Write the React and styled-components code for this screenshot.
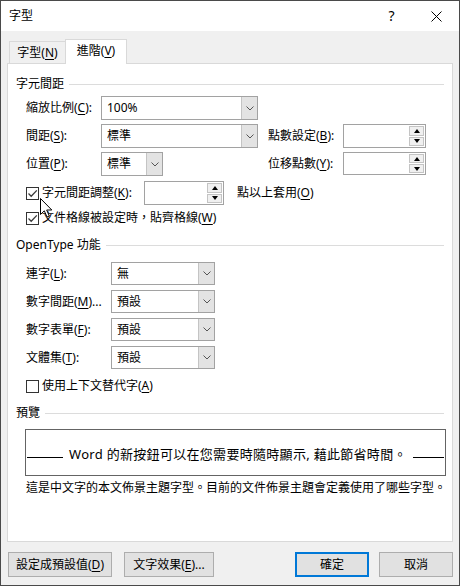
import React from 'react'
import styled, { createGlobalStyle } from 'styled-components'

const GlobalStyle = createGlobalStyle`
  html, body { margin: 0; padding: 0; background: #fff; }
  body {
    font-family: "Noto Sans", "Noto Sans CJK TC", sans-serif;
    font-size: 12px;
    line-height: 16px;
    color: #000;
  }
  * { box-sizing: border-box; }
  u { text-underline-offset: 2px; }
`

const Window = styled.div`
  position: relative;
  width: 460px;
  height: 586px;
  border: 1px solid #4a4a4a;
  display: flex;
  flex-direction: column;
  overflow: hidden;
`

const TitleBar = styled.div`
  height: 30px;
  background: #fff;
  display: flex;
  align-items: center;
  padding-left: 8px;
`

const Title = styled.div`
  flex: 1;
`

const CaptionButton = styled.div`
  width: 45px;
  height: 30px;
  display: flex;
  align-items: center;
  justify-content: center;
  font-size: 14px;
`

const Body = styled.div`
  flex: 1;
  background: #f0f0f0;
  padding: 8px 6px 8px 6px;
  display: flex;
  flex-direction: column;
`

const TabStrip = styled.div`
  display: flex;
  align-items: flex-end;
  height: 25px;
  margin-left: 2px;
  margin-bottom: -1px;
  position: relative;
  z-index: 1;
`

const Tab = styled.div`
  height: ${({ $active }) => ($active ? '25px' : '22px')};
  margin-bottom: ${({ $active }) => ($active ? '0' : '1px')};
  width: ${({ $active }) => ($active ? '62px' : '56px')};
  background: ${({ $active }) => ($active ? '#fff' : '#f0f0f0')};
  border: 1px solid #d9d9d9;
  border-bottom: none;
  border-right: ${({ $active }) => ($active ? '1px solid #d9d9d9' : 'none')};
  display: flex;
  align-items: center;
  justify-content: center;
  padding-bottom: ${({ $active }) => ($active ? '3px' : '0')};
`

const Panel = styled.div`
  height: 479px;
  background: #fff;
  border: 1px solid #d9d9d9;
  padding: 0 8px;
  display: flex;
  flex-direction: column;
`

const SectionHeader = styled.div`
  display: flex;
  align-items: center;
  height: 16px;
  margin-top: ${({ $mt }) => $mt}px;
  &::after {
    content: '';
    flex: 1;
    height: 1px;
    background: #dcdcdc;
    margin-left: 5px;
  }
`

const SpacingGrid = styled.div`
  display: grid;
  grid-template-columns: 75px 157px 10px 75px 83px;
  grid-auto-rows: 24px;
  row-gap: 4px;
  margin: 4px 0 0 10px;
`

const OpenTypeGrid = styled.div`
  display: grid;
  grid-template-columns: 85px 104px;
  grid-auto-rows: 23px;
  row-gap: 5px;
  margin: 9px 0 0 10px;
`

const Label = styled.div`
  grid-column: ${({ $col }) => $col || 1};
  align-self: center;
  white-space: nowrap;
`

const ComboBox = styled.div`
  width: ${({ $w }) => $w}px;
  height: 100%;
  border: 1px solid #a2a2a2;
  background: #fff;
  display: flex;
`

const ComboValue = styled.div`
  flex: 1;
  display: flex;
  align-items: center;
  padding-left: 5px;
`

const ComboArrow = styled.div`
  width: 16px;
  background: #e3e3e3;
  border-left: 1px solid #c4c4c4;
  display: flex;
  align-items: center;
  justify-content: center;
`

const SpinBox = styled.div`
  width: ${({ $w }) => $w}px;
  height: ${({ $h }) => $h || 23}px;
  border: 1px solid #a2a2a2;
  background: #fff;
  display: flex;
  padding: 1px;
`

const SpinField = styled.div`
  flex: 1;
`

const SpinButtons = styled.div`
  width: 15px;
  display: flex;
  flex-direction: column;
  gap: 1px;
`

const SpinButton = styled.div`
  flex: 1;
  background: #f0f0f0;
  border: 1px solid #c4c4c4;
  display: flex;
  align-items: center;
  justify-content: center;
  &::before {
    content: '';
    border-left: 3.5px solid transparent;
    border-right: 3.5px solid transparent;
    ${({ $down }) =>
      $down ? 'border-top: 4px solid #000;' : 'border-bottom: 4px solid #000;'}
  }
`

const CheckRow = styled.div`
  display: flex;
  align-items: center;
  height: ${({ $h }) => $h}px;
  margin-top: ${({ $mt }) => $mt}px;
  margin-left: 10px;
  white-space: nowrap;
`

const CheckLabel = styled.div`
  display: flex;
  align-items: center;
  width: ${({ $w }) => ($w ? `${$w}px` : 'auto')};
  gap: 3px;
`

const CheckBox = styled.div`
  width: 13px;
  height: 13px;
  border: 1px solid #333;
  background: #fff;
  display: flex;
  align-items: center;
  justify-content: center;
  flex-shrink: 0;
`

const TrailText = styled.div`
  margin-left: 13px;
`

const PreviewBox = styled.div`
  margin: 8px 0 0 9px;
  width: 421px;
  height: 47px;
  border: 1px solid #646464;
  display: flex;
  align-items: center;
  padding: 3px 1px 0 1px;
`

const PreviewRule = styled.div`
  width: ${({ $w }) => ($w ? `${$w}px` : 'auto')};
  flex: ${({ $w }) => ($w ? 'none' : '1')};
  height: 1px;
  background: #000;
  margin-top: 6px;
`

const PreviewText = styled.div`
  font-size: 13px;
  letter-spacing: 0.3px;
  margin: 0 6px;
  white-space: nowrap;
`

const Description = styled.div`
  margin: 4px 0 0 10px;
  white-space: nowrap;
`

const Footer = styled.div`
  display: flex;
  margin-top: 10px;
  height: 25px;
  padding-left: 1px;
`

const Button = styled.div`
  width: ${({ $w }) => $w}px;
  margin-left: ${({ $ml }) => ($ml === 'auto' ? 'auto' : `${$ml || 0}px`)};
  background: #e1e1e1;
  border: ${({ $primary }) => ($primary ? '2px solid #0078d7' : '1px solid #adadad')};
  display: flex;
  align-items: center;
  justify-content: center;
  white-space: nowrap;
`

const Cursor = styled.svg`
  position: absolute;
  left: 39px;
  top: 197px;
`

const Chevron = () => (
  <svg width="8" height="5" viewBox="0 0 8 5">
    <polyline points="0.5,0.5 4,4 7.5,0.5" fill="none" stroke="#555" strokeWidth="1" />
  </svg>
)

const Combo = ({ value, width }) => (
  <ComboBox $w={width}>
    <ComboValue>{value}</ComboValue>
    <ComboArrow>
      <Chevron />
    </ComboArrow>
  </ComboBox>
)

const Spin = ({ width, height }) => (
  <SpinBox $w={width} $h={height}>
    <SpinField />
    <SpinButtons>
      <SpinButton />
      <SpinButton $down />
    </SpinButtons>
  </SpinBox>
)

const Check = ({ checked }) => (
  <CheckBox>
    {checked && (
      <svg width="11" height="11" viewBox="0 0 11 11">
        <polyline points="1.5,5.5 4.2,8.2 9.8,2.4" fill="none" stroke="#3a3a3a" strokeWidth="1.3" />
      </svg>
    )}
  </CheckBox>
)

const Key = ({ children }) => <u>{children}</u>

export default function App() {
  return (
    <>
      <GlobalStyle />
      <Window>
        <TitleBar>
          <Title>字型</Title>
          <CaptionButton>?</CaptionButton>
          <CaptionButton>
            <svg width="11" height="11" viewBox="0 0 11 11">
              <path d="M0.5 0.5 L10.5 10.5 M10.5 0.5 L0.5 10.5" stroke="#000" strokeWidth="1" />
            </svg>
          </CaptionButton>
        </TitleBar>

        <Body>
          <TabStrip>
            <Tab><span>字型(<Key>N</Key>)</span></Tab>
            <Tab $active><span>進階(<Key>V</Key>)</span></Tab>
          </TabStrip>

          <Panel>
            <SectionHeader $mt={12}>字元間距</SectionHeader>
            <SpacingGrid>
              <Label>縮放比例(<Key>C</Key>):</Label>
              <Combo value="100%" width={157} />

              <Label>間距(<Key>S</Key>):</Label>
              <Combo value="標準" width={157} />
              <Label $col={4}>點數設定(<Key>B</Key>):</Label>
              <Spin width={83} height={24} />

              <Label>位置(<Key>P</Key>):</Label>
              <Combo value="標準" width={62} />
              <Label $col={4}>位移點數(<Key>Y</Key>):</Label>
              <Spin width={83} height={23} />
            </SpacingGrid>

            <CheckRow $h={24} $mt={5}>
              <CheckLabel $w={118}>
                <Check checked />
                <span>字元間距調整(<Key>K</Key>):</span>
              </CheckLabel>
              <Spin width={80} height={24} />
              <TrailText>點以上套用(<Key>O</Key>)</TrailText>
            </CheckRow>
            <CheckRow $h={18} $mt={4}>
              <CheckLabel>
                <Check checked />
                <span>文件格線被設定時，貼齊格線(<Key>W</Key>)</span>
              </CheckLabel>
            </CheckRow>

            <SectionHeader $mt={10}>OpenType 功能</SectionHeader>
            <OpenTypeGrid>
              <Label>連字(<Key>L</Key>):</Label>
              <Combo value="無" width={104} />
              <Label>數字間距(<Key>M</Key>)...</Label>
              <Combo value="預設" width={104} />
              <Label>數字表單(<Key>F</Key>):</Label>
              <Combo value="預設" width={104} />
              <Label>文體集(<Key>T</Key>):</Label>
              <Combo value="預設" width={104} />
            </OpenTypeGrid>
            <CheckRow $h={18} $mt={8}>
              <CheckLabel>
                <Check />
                <span>使用上下文替代字(<Key>A</Key>)</span>
              </CheckLabel>
            </CheckRow>

            <SectionHeader $mt={10}>預覽</SectionHeader>
            <PreviewBox>
              <PreviewRule $w={36} />
              <PreviewText>Word 的新按鈕可以在您需要時隨時顯示, 藉此節省時間。</PreviewText>
              <PreviewRule />
            </PreviewBox>
            <Description>這是中文字的本文佈景主題字型。目前的文件佈景主題會定義使用了哪些字型。</Description>
          </Panel>

          <Footer>
            <Button $w={104}><span>設定成預設值(<Key>D</Key>)</span></Button>
            <Button $w={90} $ml={12}><span>文字效果(<Key>E</Key>)...</span></Button>
            <Button $w={74} $ml="auto" $primary>確定</Button>
            <Button $w={74} $ml={10}>取消</Button>
          </Footer>
        </Body>

        <Cursor width="14" height="21" viewBox="0 0 14 21">
          <path
            d="M0.5 0.5 L0.5 16.5 L4.3 12.8 L7 19 L9.3 18 L6.7 12 L11.8 12 Z"
            fill="#fff"
            stroke="#000"
            strokeWidth="1"
            strokeLinejoin="miter"
          />
        </Cursor>
      </Window>
    </>
  )
}
